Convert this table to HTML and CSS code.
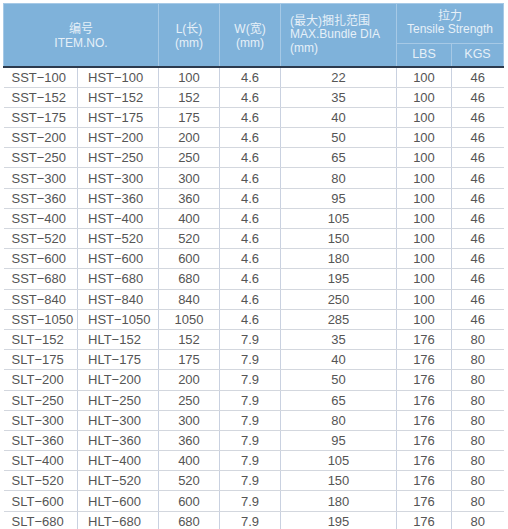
FILE: index.html
```html
<!DOCTYPE html>
<html>
<head>
<meta charset="utf-8">
<link rel="stylesheet" href="styles.css">
</head>
<body>
<table class="spec">
  <colgroup>
    <col class="c1"><col class="c2"><col class="c3"><col class="c4"><col class="c5"><col class="c6"><col class="c7">
  </colgroup>
  <thead>
    <tr class="h1">
      <th colspan="2" rowspan="2" class="mid">编号<br>ITEM.NO.</th>
      <th rowspan="2" class="mid">L(长)<br>(mm)</th>
      <th rowspan="2" class="mid">W(宽)<br>(mm)</th>
      <th rowspan="2" class="left">(最大)捆扎范围<br>MAX.Bundle DIA<br>(mm)</th>
      <th colspan="2" class="top">拉力<br>Tensile Strength</th>
    </tr>
    <tr class="h2">
      <th>LBS</th>
      <th>KGS</th>
    </tr>
  </thead>
  <tbody>
    <tr><td class="id">SST−100</td><td class="id2">HST−100</td><td>100</td><td>4.6</td><td>22</td><td>100</td><td>46</td></tr>
    <tr><td class="id">SST−152</td><td class="id2">HST−152</td><td>152</td><td>4.6</td><td>35</td><td>100</td><td>46</td></tr>
    <tr><td class="id">SST−175</td><td class="id2">HST−175</td><td>175</td><td>4.6</td><td>40</td><td>100</td><td>46</td></tr>
    <tr><td class="id">SST−200</td><td class="id2">HST−200</td><td>200</td><td>4.6</td><td>50</td><td>100</td><td>46</td></tr>
    <tr><td class="id">SST−250</td><td class="id2">HST−250</td><td>250</td><td>4.6</td><td>65</td><td>100</td><td>46</td></tr>
    <tr><td class="id">SST−300</td><td class="id2">HST−300</td><td>300</td><td>4.6</td><td>80</td><td>100</td><td>46</td></tr>
    <tr><td class="id">SST−360</td><td class="id2">HST−360</td><td>360</td><td>4.6</td><td>95</td><td>100</td><td>46</td></tr>
    <tr><td class="id">SST−400</td><td class="id2">HST−400</td><td>400</td><td>4.6</td><td>105</td><td>100</td><td>46</td></tr>
    <tr><td class="id">SST−520</td><td class="id2">HST−520</td><td>520</td><td>4.6</td><td>150</td><td>100</td><td>46</td></tr>
    <tr><td class="id">SST−600</td><td class="id2">HST−600</td><td>600</td><td>4.6</td><td>180</td><td>100</td><td>46</td></tr>
    <tr><td class="id">SST−680</td><td class="id2">HST−680</td><td>680</td><td>4.6</td><td>195</td><td>100</td><td>46</td></tr>
    <tr><td class="id">SST−840</td><td class="id2">HST−840</td><td>840</td><td>4.6</td><td>250</td><td>100</td><td>46</td></tr>
    <tr><td class="id">SST−1050</td><td class="id2">HST−1050</td><td>1050</td><td>4.6</td><td>285</td><td>100</td><td>46</td></tr>
    <tr><td class="id">SLT−152</td><td class="id2">HLT−152</td><td>152</td><td>7.9</td><td>35</td><td>176</td><td>80</td></tr>
    <tr><td class="id">SLT−175</td><td class="id2">HLT−175</td><td>175</td><td>7.9</td><td>40</td><td>176</td><td>80</td></tr>
    <tr><td class="id">SLT−200</td><td class="id2">HLT−200</td><td>200</td><td>7.9</td><td>50</td><td>176</td><td>80</td></tr>
    <tr><td class="id">SLT−250</td><td class="id2">HLT−250</td><td>250</td><td>7.9</td><td>65</td><td>176</td><td>80</td></tr>
    <tr><td class="id">SLT−300</td><td class="id2">HLT−300</td><td>300</td><td>7.9</td><td>80</td><td>176</td><td>80</td></tr>
    <tr><td class="id">SLT−360</td><td class="id2">HLT−360</td><td>360</td><td>7.9</td><td>95</td><td>176</td><td>80</td></tr>
    <tr><td class="id">SLT−400</td><td class="id2">HLT−400</td><td>400</td><td>7.9</td><td>105</td><td>176</td><td>80</td></tr>
    <tr><td class="id">SLT−520</td><td class="id2">HLT−520</td><td>520</td><td>7.9</td><td>150</td><td>176</td><td>80</td></tr>
    <tr><td class="id">SLT−600</td><td class="id2">HLT−600</td><td>600</td><td>7.9</td><td>180</td><td>176</td><td>80</td></tr>
    <tr><td class="id">SLT−680</td><td class="id2">HLT−680</td><td>680</td><td>7.9</td><td>195</td><td>176</td><td>80</td></tr>
  </tbody>
</table>
</body>
</html>
```
FILE: styles.css
```css
html, body {
  margin: 0;
  padding: 0;
  background: #ffffff;
}
body {
  padding: 3px 0 0 3px;
  font-family: "Liberation Sans", Arial, "Noto Sans CJK SC", sans-serif;
}
.spec {
  border-collapse: collapse;
  table-layout: fixed;
  width: 500px;
}
.c1 { width: 74px; }
.c2 { width: 81px; }
.c3 { width: 61px; }
.c4 { width: 61px; }
.c5 { width: 116px; }
.c6 { width: 55px; }
.c7 { width: 52px; }

.spec th {
  background: #7fb2da;
  color: #e6f0f8;
  font-weight: normal;
  font-size: 12px;
  line-height: 13.5px;
  padding: 0;
  border: 1px solid #a6c9e6;
  text-align: center;
  vertical-align: middle;
}
.spec thead tr.h1 { height: 40px; }
.spec thead tr.h2 { height: 23px; }
.spec th.left {
  text-align: left;
  padding-left: 9px;
}
.spec th.top {
  padding-bottom: 1px;
}
.spec th.mid {
  padding-top: 4px;
}
.spec thead tr.h2 th {
  border-bottom: 2px solid #2c3a4d;
  font-size: 12.5px;
}
.spec thead tr.h1 th[rowspan] {
  border-bottom: 2px solid #2c3a4d;
}
.spec td {
  height: 19.2px;
  padding: 0;
  font-size: 13px;
  color: #555555;
  text-align: center;
  vertical-align: middle;
  border-bottom: 1px solid #d3d7de;
  border-left: 1px solid #c9d1e0;
  border-right: 1px solid #c9d1e0;
}
.spec td.id {
  text-align: left;
  padding-left: 8px;
  border-left: none;
}
.spec td.id2 {
  text-align: left;
  padding-left: 10px;
}
.spec td:last-child {
  border-right: none;
}
```
